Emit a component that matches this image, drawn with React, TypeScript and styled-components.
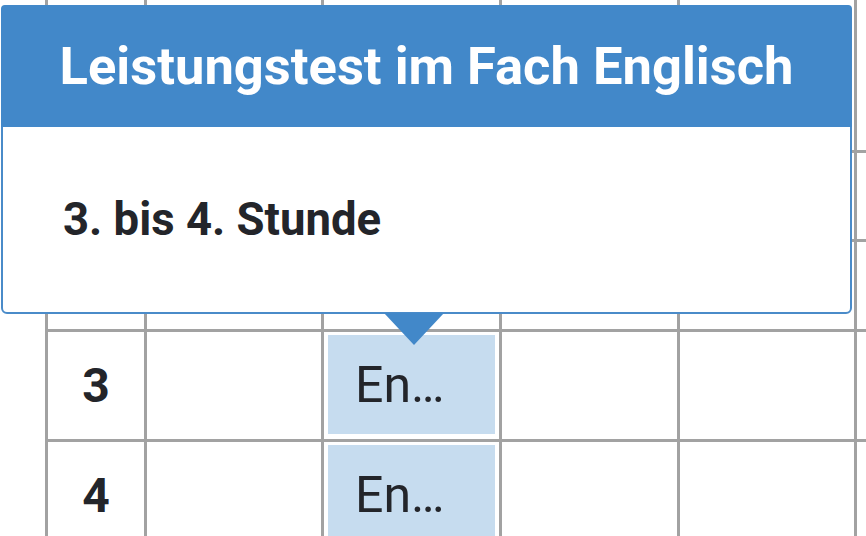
import React from "react";
import styled, { createGlobalStyle } from "styled-components";

const GlobalStyle = createGlobalStyle`
  html, body {
    margin: 0;
    padding: 0;
    background: #ffffff;
    font-family: Roboto, "Noto Sans", Arial, sans-serif;
  }
`;

const Screen = styled.div`
  position: relative;
  width: 866px;
  height: 536px;
  overflow: hidden;
  background: #fff;
`;

const Table = styled.div`
  display: grid;
  grid-template-columns: 96px 174px 175px 175px 174px 200px;
  grid-template-rows: 160px 86px 87px 107px 107px;
  gap: 3px;
  padding: 3px;
  margin: -13px 0 0 45px;
  width: max-content;
  background: #a2a2a2;
`;

const Cell = styled.div`
  background: #fff;
  display: flex;
  align-items: center;
  justify-content: center;
  font-size: 48px;
  font-weight: 700;
  color: #23252a;
`;

const LessonCell = styled.div`
  background: #fff;
  padding: 3px 4px 5px 4px;
  display: flex;
`;

const Lesson = styled.div`
  flex: 1;
  background: #c6dcef;
  display: flex;
  align-items: center;
  padding-left: 27px;
  font-size: 50px;
  font-weight: 400;
  color: #23252a;
`;

const Popup = styled.div`
  position: absolute;
  left: 1px;
  top: 5px;
  width: 851px;
  height: 309px;
  box-sizing: border-box;
  border: 2px solid #4a8bc9;
  border-radius: 6px;
  background: #fff;
  display: flex;
  flex-direction: column;
`;

const PopupHeader = styled.div`
  height: 122px;
  background: #4288c9;
  border-radius: 4px 4px 0 0;
  margin: -2px -2px 0 -2px;
  display: flex;
  align-items: center;
  justify-content: center;
  color: #fff;
  font-size: 52.5px;
  font-weight: 700;
`;

const PopupBody = styled.div`
  flex: 1;
  display: flex;
  align-items: center;
  padding: 0 0 0 60px;
  font-size: 45.5px;
  font-weight: 700;
  color: #23252a;
`;

const Arrow = styled.div`
  position: absolute;
  left: 381px;
  bottom: -33px;
  width: 0;
  height: 0;
  border-left: 30px solid transparent;
  border-right: 30px solid transparent;
  border-top: 32px solid #4288c9;
`;

const rows = [
  { label: "", lesson: null },
  { label: "", lesson: null },
  { label: "", lesson: null },
  { label: "3", lesson: "En…" },
  { label: "4", lesson: "En…" },
];

export default function App() {
  return (
    <>
      <GlobalStyle />
      <Screen>
        <Table>
          {rows.map((row, r) => (
            <React.Fragment key={r}>
              <Cell>{row.label}</Cell>
              <Cell />
              {row.lesson ? (
                <LessonCell>
                  <Lesson>{row.lesson}</Lesson>
                </LessonCell>
              ) : (
                <Cell />
              )}
              <Cell />
              <Cell />
              <Cell />
            </React.Fragment>
          ))}
        </Table>
        <Popup>
          <PopupHeader>Leistungstest im Fach Englisch</PopupHeader>
          <PopupBody>3. bis 4. Stunde</PopupBody>
          <Arrow />
        </Popup>
      </Screen>
    </>
  );
}
